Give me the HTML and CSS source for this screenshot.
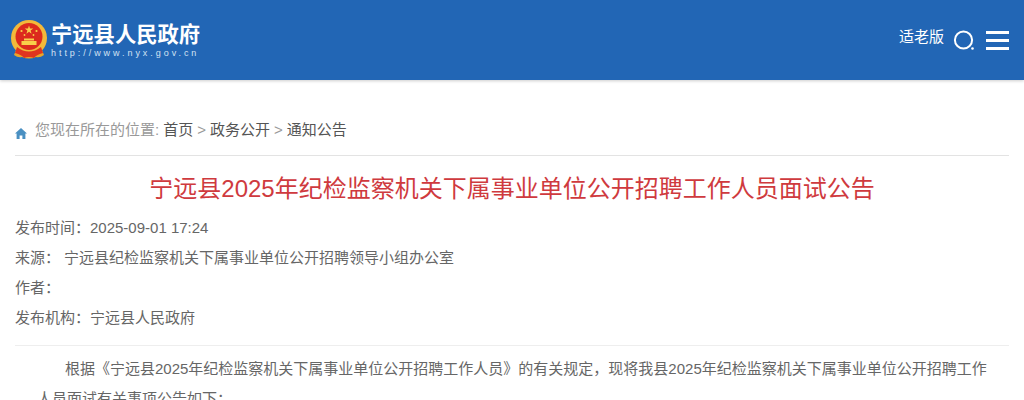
FILE: index.html
```html
<!DOCTYPE html>
<html lang="zh-CN">
<head>
  <meta charset="UTF-8" />
  <title>宁远县2025年纪检监察机关下属事业单位公开招聘工作人员面试公告</title>
  <link rel="stylesheet" href="styles.css">
</head>
<body>
  <header class="header">
    <div class="logo">
      <svg class="emblem" viewBox="0 0 38 40" width="38" height="40">
        <path d="M6 30 Q19 39 32 30 L34 35 Q30 38 26 37 Q19 40 12 37 Q8 38 4 35 Z" fill="#e8a52a"/>
        <circle cx="19" cy="18" r="18" fill="#f3b93a"/>
        <circle cx="19" cy="16.5" r="13.5" fill="#dc2a1e"/>
        <polygon points="19,5.5 20,8.6 23.3,8.6 20.6,10.6 21.6,13.8 19,11.8 16.4,13.8 17.4,10.6 14.7,8.6 18,8.6" fill="#f8d04a"/>
        <circle cx="11.5" cy="11" r="1.1" fill="#f8d04a"/>
        <circle cx="26.5" cy="11" r="1.1" fill="#f8d04a"/>
        <circle cx="14.5" cy="15" r="0.9" fill="#f8d04a"/>
        <circle cx="23.5" cy="15" r="0.9" fill="#f8d04a"/>
        <rect x="14" y="18.5" width="10" height="2" fill="#f8d04a"/>
        <rect x="11.5" y="21" width="15" height="4" fill="#f8d04a"/>
        <path d="M7 27 Q19 36 31 27 L33 33 Q26 35 24 38 Q19 36 14 38 Q12 35 5 33 Z" fill="#e0341f"/>
      </svg>
      <div class="logo-text">
        <div class="logo-name">宁远县人民政府</div>
        <div class="logo-url">http://www.nyx.gov.cn</div>
      </div>
    </div>
    <div class="tools">
      <span class="elder">适老版</span>
      <svg class="search" viewBox="0 0 22 22" width="22" height="22">
        <circle cx="10.5" cy="11" r="8.6" fill="none" stroke="#fff" stroke-width="2"/>
        <circle cx="19.5" cy="19.5" r="1.3" fill="#fff"/>
      </svg>
      <div class="menu"><span></span><span></span><span></span></div>
    </div>
  </header>

  <main class="page">
    <div class="crumb">
      <svg class="home" viewBox="0 0 12 11" width="12" height="11">
        <path d="M6 0 L12 5.6 L10.4 5.6 L10.4 11 L7.4 11 L7.4 7.4 L4.6 7.4 L4.6 11 L1.6 11 L1.6 5.6 L0 5.6 Z" fill="#4a90c2"/>
      </svg>
      <span class="crumb-label">您现在所在的位置:</span>
      <a>首页</a><span class="sep">&gt;</span><a>政务公开</a><span class="sep">&gt;</span><a>通知公告</a>
    </div>

    <h1 class="title">宁远县2025年纪检监察机关下属事业单位公开招聘工作人员面试公告</h1>

    <div class="meta">
      <div class="meta-row">发布时间：2025-09-01 17:24</div>
      <div class="meta-row"><span class="meta-key">来源：</span>宁远县纪检监察机关下属事业单位公开招聘领导小组办公室</div>
      <div class="meta-row">作者：</div>
      <div class="meta-row">发布机构：宁远县人民政府</div>
    </div>

    <div class="content">
      <p>根据《宁远县2025年纪检监察机关下属事业单位公开招聘工作人员》的有关规定，现将我县2025年纪检监察机关下属事业单位公开招聘工作人员面试有关事项公告如下：</p>
    </div>
  </main>
</body>
</html>
```

FILE: styles.css
```css
html, body {
  margin: 0;
  height: 400px;
  overflow: hidden;
}
body {
  background: #fff;
  color: #555;
  font-family: "Liberation Sans", "Noto Sans CJK SC", sans-serif;
  font-size: 15px;
}
.header {
  height: 80px;
  background: #2266b5;
  box-shadow: 0 1px 3px rgba(0,0,0,0.2);
  display: flex;
  justify-content: space-between;
  align-items: center;
  padding: 0 15px 0 10px;
}
.logo {
  display: flex;
  align-items: center;
  gap: 3px;
}
.logo-text {
  color: #fff;
}
.logo-name {
  font-size: 21.3px;
  font-weight: bold;
  line-height: 26px;
}
.logo-url {
  font-size: 9px;
  line-height: 10px;
  letter-spacing: 2.95px;
  color: #d3e2f3;
}
.tools {
  display: flex;
  align-items: center;
  color: #fff;
  margin-top: -2px;
}
.elder {
  font-size: 15px;
  margin-right: 9px;
  margin-top: -7px;
}
.search {
  margin-right: 11px;
  margin-top: 2px;
}
.menu {
  width: 23px;
  display: flex;
  flex-direction: column;
  gap: 5px;
  margin-top: 2px;
}
.menu span {
  height: 3px;
  background: #fff;
}
.page {
  padding: 0 15px;
}
.crumb {
  margin-top: 38px;
  height: 37px;
  line-height: 24px;
  border-bottom: 1px solid #e3e3e3;
  color: #555;
  display: flex;
  align-items: flex-start;
}
.home {
  margin: 10px 8px 0 0;
}
.crumb-label {
  color: #999;
  margin-right: 4px;
}
.sep {
  color: #999;
  margin: 0 4px;
}
.title {
  margin: 16px 0 0;
  font-size: 24px;
  font-weight: normal;
  line-height: 34px;
  text-align: center;
  color: #cf3a3e;
}
.meta {
  margin-top: 7px;
  padding-bottom: 12px;
  border-bottom: 1px solid #eee;
}
.meta-row {
  line-height: 30px;
  color: #666;
}
.meta-key {
  margin-right: 4px;
}
.content p {
  margin: 8px 0 0;
  padding: 0 22px;
  text-indent: 28px;
  line-height: 30px;
  color: #666;
}
```
